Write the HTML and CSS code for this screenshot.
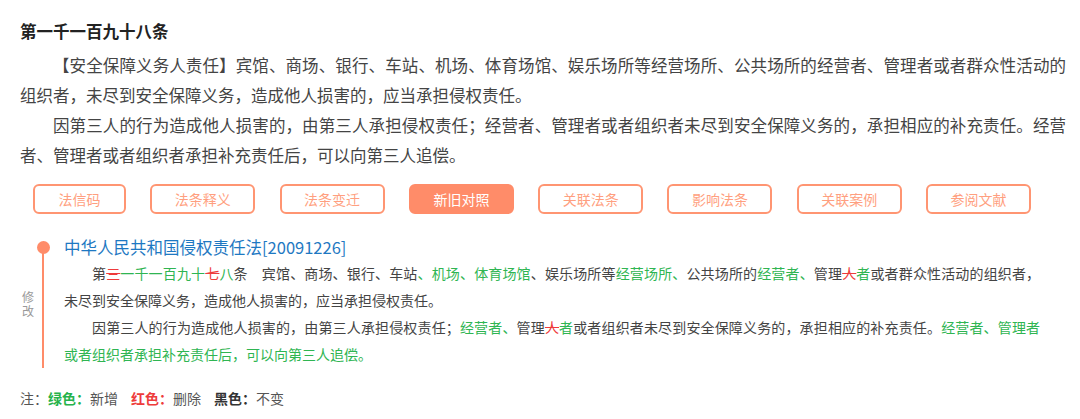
FILE: index.html
```html
<!DOCTYPE html>
<html lang="zh-CN">
<head>
<meta charset="utf-8">
<title>第一千一百九十八条</title>
<link rel="stylesheet" href="styles.css">
</head>
<body>
<div class="page">
  <h2 class="article-title">第一千一百九十八条</h2>
  <div class="article-body">
    <p>【安全保障义务人责任】宾馆、商场、银行、车站、机场、体育场馆、娱乐场所等经营场所、公共场所的经营者、管理者或者群众性活动的组织者，未尽到安全保障义务，造成他人损害的，应当承担侵权责任。</p>
    <p>因第三人的行为造成他人损害的，由第三人承担侵权责任；经营者、管理者或者组织者未尽到安全保障义务的，承担相应的补充责任。经营者、管理者或者组织者承担补充责任后，可以向第三人追偿。</p>
  </div>
  <div class="tabs">
    <span class="tab tab-short">法信码</span>
    <span class="tab">法条释义</span>
    <span class="tab">法条变迁</span>
    <span class="tab active">新旧对照</span>
    <span class="tab">关联法条</span>
    <span class="tab">影响法条</span>
    <span class="tab">关联案例</span>
    <span class="tab">参阅文献</span>
  </div>
  <div class="compare">
    <div class="rail">
      <span class="rail-dot"></span>
      <span class="rail-label">修改</span>
    </div>
    <div class="compare-content">
      <div class="law-name">中华人民共和国侵权责任法[20091226]</div>
      <p>第<del>三</del><ins>一千一百九十</ins><del>七</del><ins>八</ins>条　宾馆、商场、银行、车站<ins>、机场、体育场馆</ins>、娱乐场所等<ins>经营场所、</ins>公共场所的<ins>经营者、</ins>管理<del>人</del><ins>者</ins>或者群众性活动的组织者，未尽到安全保障义务，造成他人损害的，应当承担侵权责任。</p>
      <p>因第三人的行为造成他人损害的，由第三人承担侵权责任；<ins>经营者、</ins>管理<del>人</del><ins>者</ins>或者组织者未尽到安全保障义务的，承担相应的补充责任。<ins>经营者、管理者或者组织者承担补充责任后，可以向第三人追偿。</ins></p>
    </div>
  </div>
  <div class="legend">
    <span>注：</span><b class="g">绿色：</b><span class="item">新增</span><b class="r">红色：</b><span class="item">删除</span><b class="k">黑色：</b><span>不变</span>
  </div>
</div>
</body>
</html>
```

FILE: styles.css
```css
* { box-sizing: border-box; }
html, body { margin: 0; padding: 0; background: #fff; }
body {
  font-family: "Noto Sans CJK SC", "Noto Sans", "Liberation Sans", sans-serif;
  color: #444;
}
.page {
  width: 1080px;
  padding: 16px 14px 0 20px;
}
.article-title {
  margin: 0;
  font-size: 16.5px;
  line-height: 30px;
  font-weight: bold;
  color: #222;
}
.article-body {
  margin-top: 4px;
}
.article-body p {
  margin: 0;
  font-size: 16.5px;
  line-height: 30px;
  text-indent: 2em;
  text-align: justify;
  color: #444;
}
.tabs {
  display: flex;
  gap: 24.3px;
  margin-top: 14px;
  padding-left: 13px;
}
.tab {
  display: inline-flex;
  align-items: center;
  justify-content: center;
  width: 105px;
  height: 30px;
  padding: 0;
  border: 2px solid #ff9572;
  border-radius: 6px;
  font-size: 14px;
  color: #ff9f80;
  background: #fff;
  white-space: nowrap;
  flex: none;
}
.tab-short { width: 93px; }
.tab.active {
  background: #ff8c69;
  border-color: #ff8c69;
  color: #fff;
}
.compare {
  display: flex;
  margin-top: 20px;
}
.rail {
  position: relative;
  width: 44px;
  flex: none;
}
.rail::before {
  content: "";
  position: absolute;
  left: 22px;
  top: 12px;
  bottom: 0;
  width: 2px;
  background: #ff8c69;
}
.rail-dot {
  position: absolute;
  left: 16.5px;
  top: 6.5px;
  width: 13px;
  height: 13px;
  border-radius: 50%;
  background: #ff8c69;
}
.rail-label {
  position: absolute;
  left: 2px;
  top: 56px;
  width: 12px;
  font-size: 12px;
  line-height: 14px;
  color: #999;
}
.compare-content {
  width: 976px;
}
.law-name {
  font-size: 16.5px;
  line-height: 26px;
  color: #1e78c2;
}
.compare-content p {
  margin: 0;
  font-size: 14px;
  line-height: 27px;
  text-indent: 2em;
  text-align: justify;
  color: #444;
}
ins {
  text-decoration: none;
  color: #2fb552;
}
del {
  color: #ee3b3b;
  text-decoration: line-through;
}
.legend {
  margin-top: 18px;
  font-size: 14px;
  line-height: 24px;
  color: #555;
}
.legend b { font-weight: bold; }
.legend .g { color: #26b24a; }
.legend .r { color: #ee3b3b; }
.legend .k { color: #333; }
.legend .item { margin-right: 13px; }
```
